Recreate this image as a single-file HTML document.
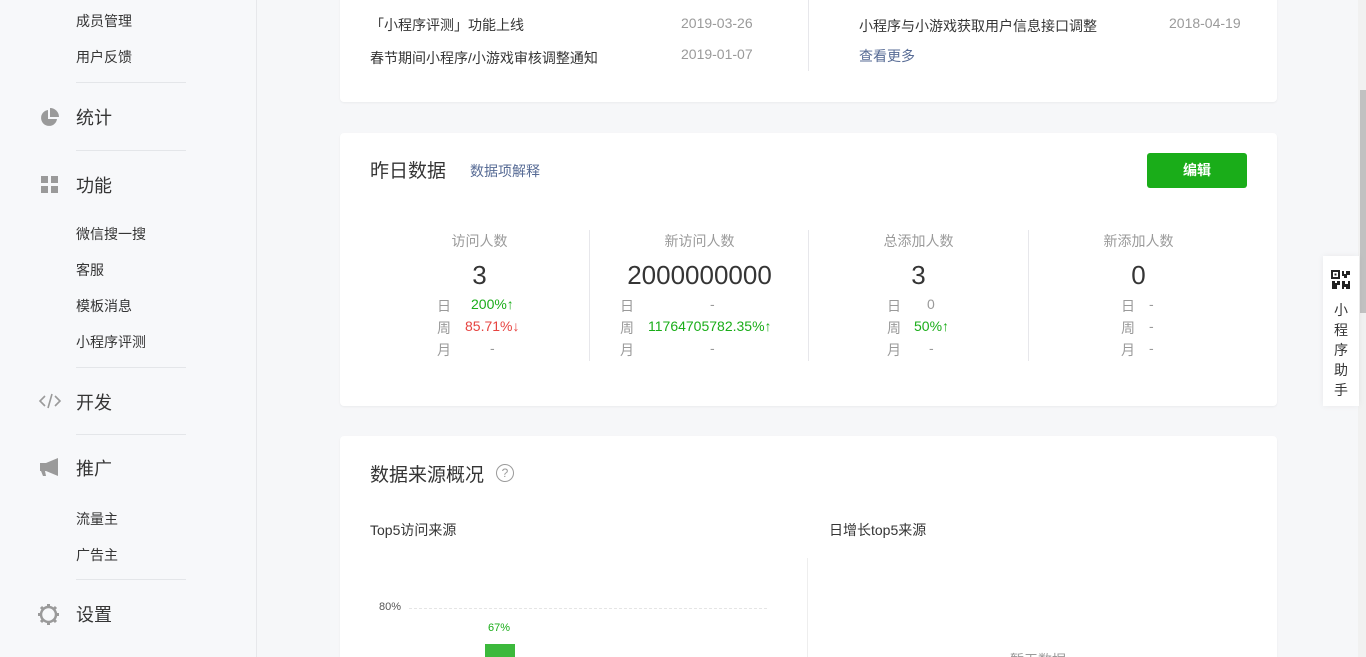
<!DOCTYPE html>
<html style="width:1366px;height:657px;overflow:hidden"><head><meta charset="utf-8"><style>
*{margin:0;padding:0;box-sizing:border-box}
body{width:1366px;height:657px;overflow:hidden;background:#f6f7f9;font-family:"Liberation Sans","Noto Sans CJK SC",sans-serif;position:relative;color:#353535}
.sb{position:absolute;left:0;top:0;width:257px;height:657px;background:#f7f8fa;border-right:1px solid #e7e8eb}
.t{position:absolute;white-space:nowrap}
.sub{left:76px;font-size:14px;color:#353535}
.big{left:76px;font-size:18px;color:#353535}
.dv{position:absolute;left:76px;width:110px;height:1px;background:#e4e6e9}
.card{position:absolute;left:340px;width:937px;background:#fff;border-radius:4px;box-shadow:0 1px 2px rgba(0,0,0,.05);overflow:hidden}
.g{color:#1aad19}.r{color:#e64340}.gr{color:#9a9a9a}
.col{position:absolute;top:230px;width:219px;height:131px}
.vl{position:absolute;top:230px;width:1px;height:131px;background:#e7e7eb}
</style></head><body>
<div class="sb">
<div class="t sub" style="top:11px">成员管理</div>
<div class="t sub" style="top:47px">用户反馈</div>
<div class="dv" style="top:82px"></div>
<svg class="t" style="left:40px;top:108px" width="19" height="19" viewBox="0 0 19 19"><path d="M8 2A8 8 0 1 0 17 11H8Z" fill="#9a9a9a"/><path d="M10 0A9 9 0 0 1 19 9H10Z" fill="#9a9a9a"/></svg>
<div class="t big" style="top:104px">统计</div>
<div class="dv" style="top:150px"></div>
<svg class="t" style="left:41px;top:176px" width="18" height="18"><rect x="0" y="0" width="7" height="7" fill="#9a9a9a"/><rect x="10" y="0" width="7" height="7" fill="#9a9a9a"/><rect x="0" y="10" width="7" height="7" fill="#9a9a9a"/><rect x="10" y="10" width="7" height="7" fill="#9a9a9a"/></svg>
<div class="t big" style="top:172px">功能</div>
<div class="t sub" style="top:224px">微信搜一搜</div>
<div class="t sub" style="top:260px">客服</div>
<div class="t sub" style="top:296px">模板消息</div>
<div class="t sub" style="top:332px">小程序评测</div>
<div class="dv" style="top:367px"></div>
<svg class="t" style="left:38px;top:392px" width="24" height="18" viewBox="0 0 24 18"><path d="M7 4L2 9L7 14M17 4L22 9L17 14M14 2L10 16" stroke="#9a9a9a" stroke-width="1.6" fill="none"/></svg>
<div class="t big" style="top:389px">开发</div>
<div class="dv" style="top:434px"></div>
<svg class="t" style="left:39px;top:457px" width="21" height="21" viewBox="0 0 21 21"><path d="M1 6H7L19 1V19L7 14H6L7 19H4L2 14H1Z" fill="#9a9a9a"/></svg>
<div class="t big" style="top:455px">推广</div>
<div class="t sub" style="top:509px">流量主</div>
<div class="t sub" style="top:545px">广告主</div>
<div class="dv" style="top:579px"></div>
<svg class="t" style="left:38px;top:604px" width="21" height="21" viewBox="0 0 21 21"><circle cx="10.5" cy="10.5" r="7.5" stroke="#9a9a9a" stroke-width="2.5" fill="none"/><g stroke="#9a9a9a" stroke-width="3"><path d="M10.5 0V3M10.5 18V21M0 10.5H3M18 10.5H21M3 3L5 5M16 16L18 18M3 18L5 16M16 5L18 3"/></g></svg>
<div class="t big" style="top:601px">设置</div>
</div>

<div class="card" style="top:-20px;height:122px">
<div class="t" style="left:30px;top:35px;font-size:14px">「小程序评测」功能上线</div>
<div class="t gr" style="left:341px;top:35px;font-size:14px">2019-03-26</div>
<div class="t" style="left:30px;top:68px;font-size:14px">春节期间小程序/小游戏审核调整通知</div>
<div class="t gr" style="left:341px;top:66px;font-size:14px">2019-01-07</div>
<div style="position:absolute;left:468px;top:0;width:1px;height:91px;background:#e7e7eb"></div>
<div class="t" style="left:519px;top:36px;font-size:14px">小程序与小游戏获取用户信息接口调整</div>
<div class="t gr" style="left:829px;top:35px;font-size:14px">2018-04-19</div>
<div class="t" style="left:519px;top:66px;font-size:14px;color:#576b95">查看更多</div>
</div>

<div class="card" style="top:133px;height:273px">
<div class="t" style="left:30px;top:23px;font-size:19px">昨日数据</div>
<div class="t" style="left:130px;top:28px;font-size:14px;color:#576b95">数据项解释</div>
<div class="t" style="left:807px;top:20px;width:100px;height:35px;background:#1aad19;border-radius:3px;color:#fff;font-size:14px;font-weight:bold;text-align:center;line-height:35px">编辑</div>
</div>
<div class="vl" style="left:589px"></div><div class="vl" style="left:808px"></div><div class="vl" style="left:1028px"></div>

<div class="col" style="left:370px">
<div class="t gr" style="left:0;width:219px;text-align:center;top:1px;font-size:14px">访问人数</div>
<div class="t" style="left:0;width:219px;text-align:center;top:30px;font-size:26px;color:#353535">3</div>
<div class="t gr" style="left:67px;top:66px;font-size:14px">日</div><div class="t g" style="left:101px;top:66px;font-size:14px">200%↑</div>
<div class="t gr" style="left:67px;top:88px;font-size:14px">周</div><div class="t r" style="left:95px;top:88px;font-size:14px">85.71%↓</div>
<div class="t gr" style="left:67px;top:110px;font-size:14px">月</div><div class="t gr" style="left:120px;top:110px;font-size:14px">-</div>
</div>
<div class="col" style="left:590px">
<div class="t gr" style="left:0;width:219px;text-align:center;top:1px;font-size:14px">新访问人数</div>
<div class="t" style="left:0;width:219px;text-align:center;top:30px;font-size:26px">2000000000</div>
<div class="t gr" style="left:30px;top:66px;font-size:14px">日</div><div class="t gr" style="left:120px;top:66px;font-size:14px">-</div>
<div class="t gr" style="left:30px;top:88px;font-size:14px">周</div><div class="t g" style="left:58px;top:88px;font-size:14px">11764705782.35%↑</div>
<div class="t gr" style="left:30px;top:110px;font-size:14px">月</div><div class="t gr" style="left:120px;top:110px;font-size:14px">-</div>
</div>
<div class="col" style="left:809px">
<div class="t gr" style="left:0;width:219px;text-align:center;top:1px;font-size:14px">总添加人数</div>
<div class="t" style="left:0;width:219px;text-align:center;top:30px;font-size:26px">3</div>
<div class="t gr" style="left:78px;top:66px;font-size:14px">日</div><div class="t gr" style="left:118px;top:66px;font-size:14px">0</div>
<div class="t gr" style="left:78px;top:88px;font-size:14px">周</div><div class="t g" style="left:105px;top:88px;font-size:14px">50%↑</div>
<div class="t gr" style="left:78px;top:110px;font-size:14px">月</div><div class="t gr" style="left:120px;top:110px;font-size:14px">-</div>
</div>
<div class="col" style="left:1029px">
<div class="t gr" style="left:0;width:219px;text-align:center;top:1px;font-size:14px">新添加人数</div>
<div class="t" style="left:0;width:219px;text-align:center;top:30px;font-size:26px">0</div>
<div class="t gr" style="left:92px;top:66px;font-size:14px">日</div><div class="t gr" style="left:120px;top:66px;font-size:14px">-</div>
<div class="t gr" style="left:92px;top:88px;font-size:14px">周</div><div class="t gr" style="left:120px;top:88px;font-size:14px">-</div>
<div class="t gr" style="left:92px;top:110px;font-size:14px">月</div><div class="t gr" style="left:120px;top:110px;font-size:14px">-</div>
</div>

<div class="card" style="top:436px;height:221px;border-radius:4px 4px 0 0">
<div class="t" style="left:30px;top:24px;font-size:19px">数据来源概况</div>
<div class="t" style="left:156px;top:28px;width:18px;height:18px;border:1px solid #9a9a9a;border-radius:50%;color:#9a9a9a;font-size:12px;text-align:center;line-height:16px">?</div>
<div class="t" style="left:30px;top:84px;font-size:14px">Top5访问来源</div>
<div class="t" style="left:489px;top:84px;font-size:14px">日增长top5来源</div>
<div style="position:absolute;left:467px;top:122px;width:1px;height:120px;background:#eee"></div>
<div class="t" style="left:39px;top:165px;font-size:11px;color:#555">80%</div>
<div style="position:absolute;left:69px;top:172px;width:358px;border-top:1px dashed #e5e5e5"></div>
<div class="t g" style="left:148px;top:186px;font-size:11px">67%</div>
<div style="position:absolute;left:145px;top:208px;width:30px;height:20px;background:#3cb93c"></div>
<div class="t gr" style="left:670px;top:214px;font-size:14px">暂无数据</div>
</div>

<div style="position:absolute;left:1358px;top:0;width:8px;height:657px;background:#f1f1f1"></div>
<div style="position:absolute;left:1360px;top:90px;width:6px;height:223px;background:#c1c1c1"></div>
<div style="position:absolute;left:1323px;top:256px;width:36px;height:150px;background:#fff;box-shadow:0 0 6px rgba(0,0,0,.06)">
<svg style="position:absolute;left:8px;top:14px" width="20" height="20" viewBox="0 0 20 20"><rect x="1" y="1" width="7" height="7" fill="none" stroke="#222" stroke-width="2"/><rect x="3.5" y="3.5" width="2" height="2" fill="#222"/><path d="M11 1h2v3h2V1h4v4h-3v3h-3V6h-2zM1 11h3v2h2v-2h3v4H6v4H1zM11 11h3v3h3v-3h2v8h-4v-2h-2v2h-2z" fill="#222"/></svg>
<div style="position:absolute;left:11px;top:44px;font-size:14px;line-height:20px;width:14px;color:#353535">小<br>程<br>序<br>助<br>手</div>
</div>
</body></html>
